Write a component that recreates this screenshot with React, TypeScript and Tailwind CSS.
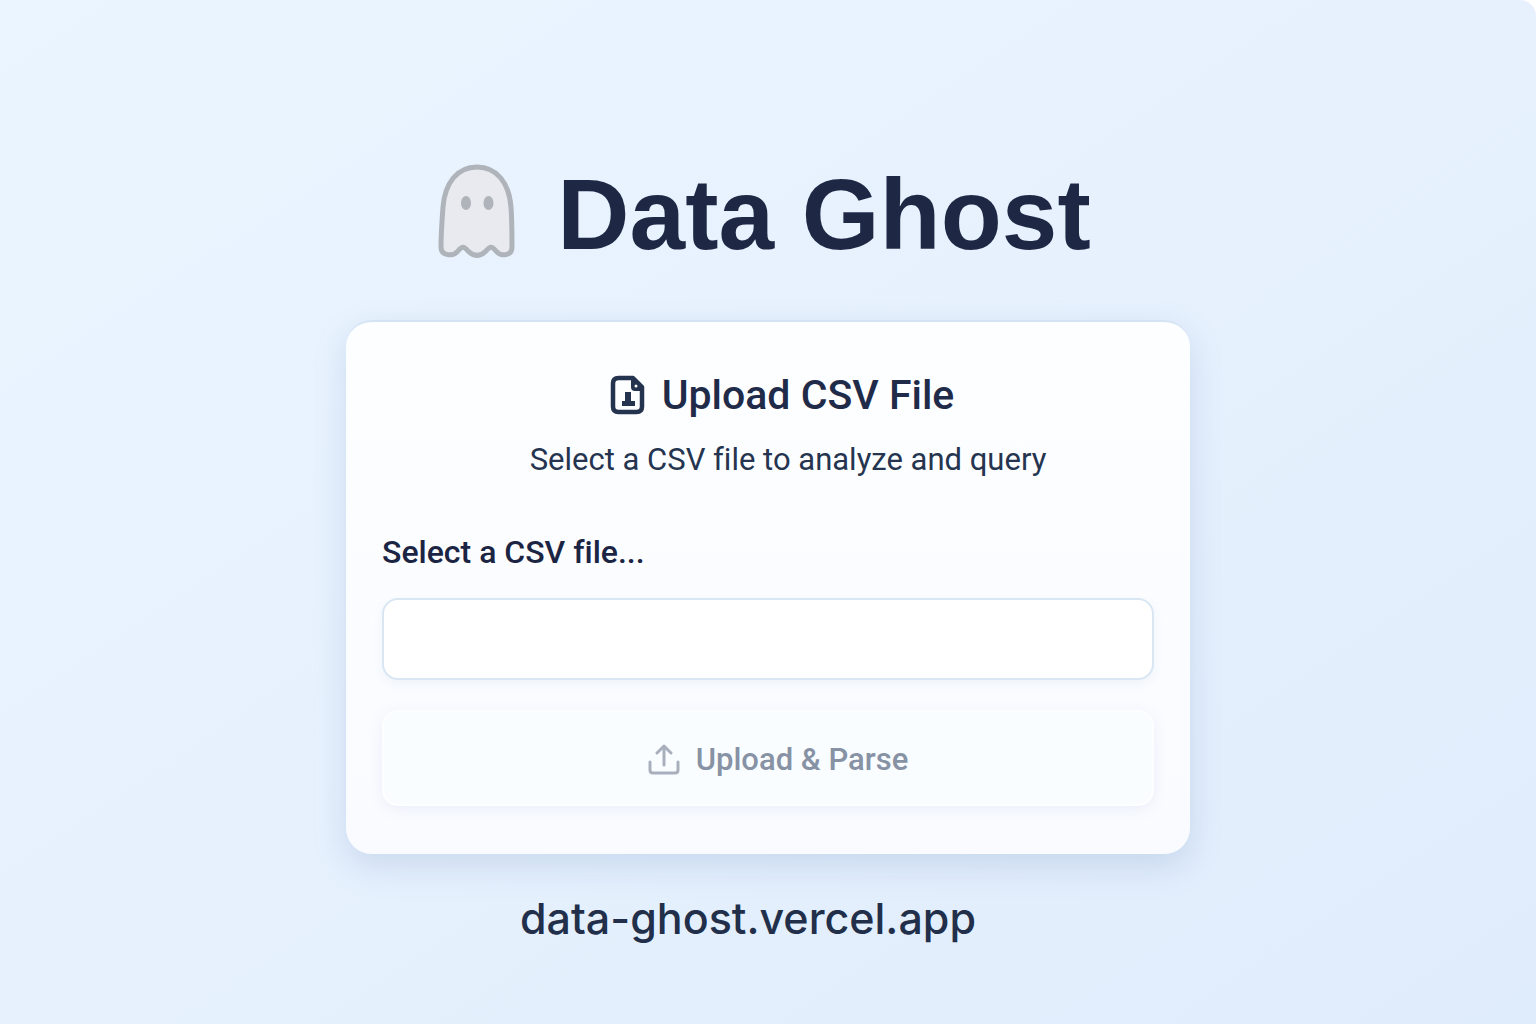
import { useState } from 'react';

function GhostIcon() {
  return (
    <svg className="h-24 w-20 shrink-0" viewBox="0 0 80 96" aria-hidden="true">
      <path
        d="M40 3C20 3 8 19 6 43C5 56 4 69 4 83C4 92 16 93 21 87C25 82 27 82 31 87C37 93 43 93 49 87C53 82 55 82 59 87C64 93 75 92 75 83C75 69 75 56 74 43C72 19 60 3 40 3Z"
        fill="#e9eaef"
        stroke="#afb4ba"
        strokeWidth="5"
        strokeLinejoin="round"
      />
      <ellipse cx="29" cy="39" rx="5" ry="7" fill="#afb4ba" />
      <ellipse cx="51.500" cy="39" rx="5" ry="7" fill="#afb4ba" />
    </svg>
  );
}

function FileIcon() {
  return (
    <svg className="h-10 w-9 shrink-0" viewBox="0 0 36 40" aria-hidden="true">
      <path
        d="M8.500 3H23L32 12V31.500Q32 37 26.500 37H8.500Q3 37 3 31.500V8.500Q3 3 8.500 3Z"
        fill="none"
        stroke="#24344f"
        strokeWidth="4.500"
        strokeLinejoin="round"
      />
      <path d="M21 3H25L33 12V16H25Q21 16 21 12Z" fill="#24344f" />
      <circle cx="26" cy="11" r="1.500" fill="#fbfdff" />
      <path d="M15 17H21V26H25V31H12V26H15Z" fill="#24344f" />
    </svg>
  );
}

function UploadIcon() {
  return (
    <svg
      className="h-8 w-8 shrink-0"
      viewBox="0 0 32 32"
      fill="none"
      stroke="#a9afbd"
      strokeWidth="3"
      strokeLinecap="round"
      strokeLinejoin="round"
      aria-hidden="true"
    >
      <path d="M2 18V26Q2 29 5 29H27Q30 29 30 26V18" />
      <path d="M16 21V3M9 9L16 2L23 9" />
    </svg>
  );
}

export default function App() {
  const [value, setValue] = useState('');
  return (
    <div className="min-h-screen bg-white font-['Roboto',sans-serif] [font-variant-ligatures:none]">
      <main className="flex min-h-screen flex-col items-center rounded-tr-2xl bg-linear-to-br from-[#ebf5ff] via-[#e7f1fe] to-[#dfecfb] px-6 pt-38">
        <header className="flex items-center gap-10 pr-2">
          <GhostIcon />
          <h1 className="pt-1 font-['Liberation_Sans',sans-serif] text-[100px] leading-[116px] font-bold text-[#1e2844]">
            Data Ghost
          </h1>
        </header>

        <section className="mt-12 w-full max-w-[844px] rounded-[26px] border-t-2 border-[#d5e3f4] bg-linear-to-b from-[#fcfeff] to-[#f9fbff] px-9 pt-12 pb-12 shadow-[0_12px_32px_rgba(100,135,180,0.22)]">
          <div className="flex items-center justify-center gap-4 pl-7">
            <FileIcon />
            <h2 className="text-[41px] leading-[50px] font-medium text-[#1f2b48]">Upload CSV File</h2>
          </div>
          <p className="mt-5 pl-10 text-center text-[31px] leading-[40px] text-[#25344f]">
            Select a CSV file to analyze and query
          </p>
          <form onSubmit={(e) => e.preventDefault()}>
            <label htmlFor="csv" className="mt-13 block text-[32px] leading-[40px] font-medium text-[#1b2543]">
              Select a CSV file...
            </label>
            <input
              id="csv"
              type="text"
              value={value}
              onChange={(e) => setValue(e.target.value)}
              className="mt-[26px] block h-[82px] w-full rounded-2xl border-2 border-[#d9e6f3] bg-white px-6 text-[32px] text-[#1b2543] shadow-[0_4px_10px_rgba(120,150,190,0.08)]"
            />
            <button
              type="submit"
              disabled
              className="mt-[30px] flex h-24 w-full items-center justify-center gap-4 rounded-2xl border-2 border-[#fdfeff] bg-[#fafdff] pt-1 pl-5 text-[31px] leading-[40px] font-medium text-[#8792a5] shadow-[0_3px_14px_rgba(120,150,190,0.12)]"
            >
              <UploadIcon />
              Upload &amp; Parse
            </button>
          </form>
        </section>

        <a href="https://data-ghost.vercel.app" className="mt-9 pr-10 font-['Inter',sans-serif] text-[43px] leading-[56px] font-medium text-[#222f4a]">
          data-ghost.vercel.app
        </a>
      </main>
    </div>
  );
}
